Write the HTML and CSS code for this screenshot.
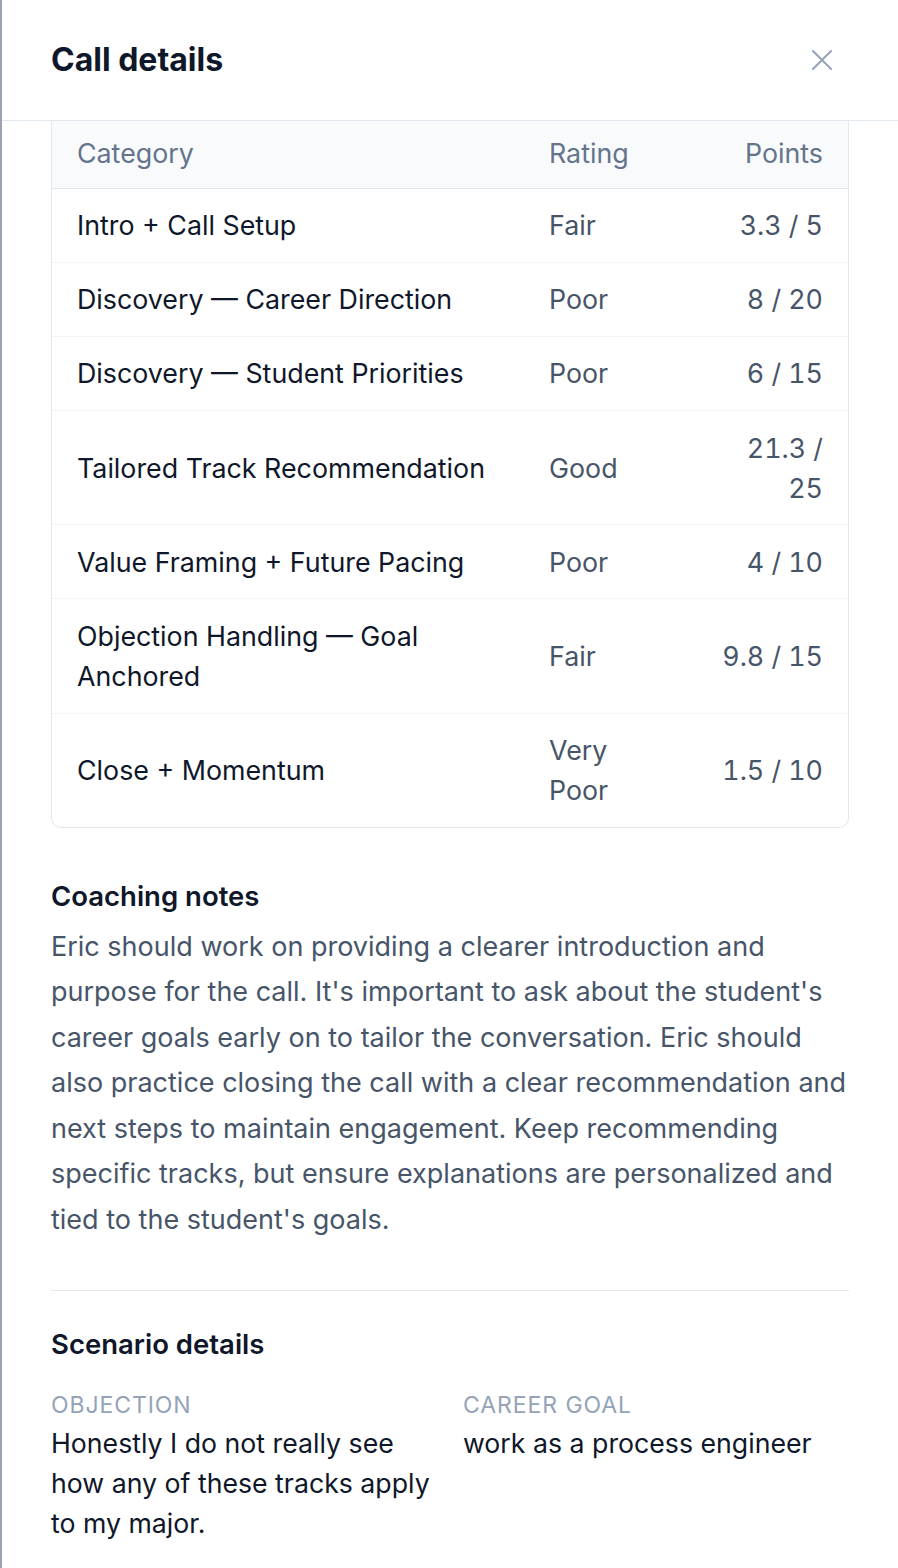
FILE: index.html
```html
<!DOCTYPE html>
<html lang="en">
<head>
<meta charset="utf-8">
<title>Call details</title>
<link rel="stylesheet" href="styles.css">
</head>
<body>
<aside class="panel">
  <header class="panel-header">
    <h1 class="panel-title">Call details</h1>
    <button class="close-btn" type="button" aria-label="Close">
      <svg viewBox="0 0 20 20" width="20" height="20" fill="none" stroke="currentColor" stroke-width="2" stroke-linecap="round">
        <path d="M1 1 L19 19 M19 1 L1 19"/>
      </svg>
    </button>
  </header>

  <div class="panel-body">
    <div class="score-table-wrap">
      <table class="score-table">
        <colgroup>
          <col class="col-category">
          <col class="col-rating">
          <col class="col-points">
        </colgroup>
        <thead>
          <tr>
            <th>Category</th>
            <th>Rating</th>
            <th class="num">Points</th>
          </tr>
        </thead>
        <tbody>
          <tr><td class="cat">Intro + Call Setup</td><td>Fair</td><td class="num">3.3 / 5</td></tr>
          <tr><td class="cat">Discovery — Career Direction</td><td>Poor</td><td class="num">8 / 20</td></tr>
          <tr><td class="cat">Discovery — Student Priorities</td><td>Poor</td><td class="num">6 / 15</td></tr>
          <tr><td class="cat">Tailored Track Recommendation</td><td>Good</td><td class="num">21.3 / 25</td></tr>
          <tr><td class="cat">Value Framing + Future Pacing</td><td>Poor</td><td class="num">4 / 10</td></tr>
          <tr><td class="cat">Objection Handling — Goal Anchored</td><td>Fair</td><td class="num">9.8 / 15</td></tr>
          <tr><td class="cat">Close + Momentum</td><td>Very Poor</td><td class="num">1.5 / 10</td></tr>
        </tbody>
      </table>
    </div>

    <section class="notes">
      <h2 class="section-title">Coaching notes</h2>
      <p class="notes-text">Eric should work on providing a clearer introduction and purpose for the call. It's important to ask about the student's career goals early on to tailor the conversation. Eric should also practice closing the call with a clear recommendation and next steps to maintain engagement. Keep recommending specific tracks, but ensure explanations are personalized and tied to the student's goals.</p>
    </section>

    <hr class="divider">

    <section class="scenario">
      <h2 class="section-title">Scenario details</h2>
      <dl class="scenario-grid">
        <div class="field">
          <dt class="field-label">Objection</dt>
          <dd class="field-value">Honestly I do not really see how any of these tracks apply to my major.</dd>
        </div>
        <div class="field">
          <dt class="field-label">Career goal</dt>
          <dd class="field-value">work as a process engineer</dd>
        </div>
      </dl>
    </section>
  </div>
</aside>
</body>
</html>
```

FILE: styles.css
```css
* {
  box-sizing: border-box;
}

html, body {
  margin: 0;
  padding: 0;
  background: #ffffff;
}

body {
  font-family: Inter, "Noto Sans", "Liberation Sans", sans-serif;
  color: #0f172a;
  -webkit-font-smoothing: antialiased;
}

.panel {
  min-height: 1568px;
  border-left: 2px solid #9ca3af;
  background: #ffffff;
}

/* header */
.panel-header {
  height: 121px;
  display: flex;
  align-items: center;
  justify-content: space-between;
  padding: 0 66px 0 49px;
  border-bottom: 1px solid #e2e8f0;
}

.panel-title {
  margin: 0;
  font-size: 32px;
  font-weight: 700;
  line-height: 40px;
  color: #0f172a;
}

.close-btn {
  width: 20px;
  height: 20px;
  padding: 0;
  border: 0;
  background: none;
  color: #94a3b8;
  display: flex;
  cursor: pointer;
}

/* body */
.panel-body {
  padding: 0 49px 40px 49px;
}

/* score table */
.score-table-wrap {
  border: 1px solid #e2e8f0;
  border-top: 0;
  border-radius: 0 0 10px 10px;
  overflow: hidden;
}

.score-table {
  width: 100%;
  table-layout: fixed;
  border-collapse: separate;
  border-spacing: 0;
  font-size: 26.8px;
  line-height: 40px;
}

.col-category { width: 472px; }
.col-rating { width: 168px; }
.col-points { width: 156px; }

.score-table th {
  background: #f8fafc;
  font-weight: 400;
  color: #64748b;
  text-align: left;
  padding: 12px 25px 14.5px;
  border-bottom: 1px solid #e2e8f0;
}

.score-table td {
  padding: 16.6px 25px;
  color: #475569;
  vertical-align: middle;
}

.score-table tbody tr + tr td {
  border-top: 1px solid #f1f5f9;
}

.score-table td.cat {
  color: #0f172a;
}

.score-table .num {
  text-align: right;
  font-variant-numeric: tabular-nums;
}

/* sections */
.section-title {
  margin: 0;
  font-size: 27.5px;
  font-weight: 600;
  line-height: 40px;
  color: #0f172a;
}

.notes {
  margin-top: 48px;
}

.notes-text {
  margin: 8px 0 0;
  font-size: 27px;
  line-height: 45.5px;
  color: #475569;
}

.divider {
  margin: 48px 0 0;
  border: 0;
  border-top: 1px solid #e2e8f0;
}

.scenario {
  margin-top: 33px;
}

.scenario-grid {
  margin: 25px 0 0;
  display: grid;
  grid-template-columns: 1fr 1fr;
  column-gap: 26px;
}

.field-label {
  font-size: 23px;
  line-height: 32px;
  text-transform: uppercase;
  letter-spacing: 0.04em;
  color: #94a3b8;
}

.field-value {
  margin: 2px 0 0;
  font-size: 26.7px;
  line-height: 40px;
  color: #0f172a;
}
```
